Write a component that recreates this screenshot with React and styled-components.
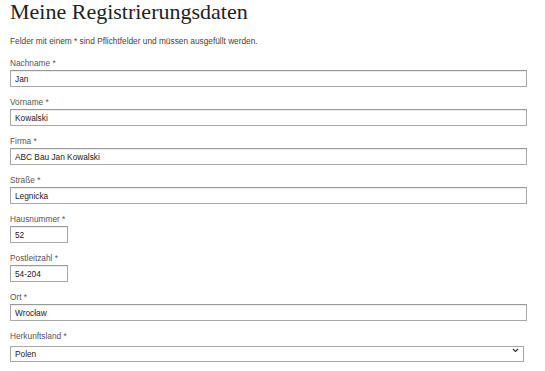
import React from "react";
import styled, { createGlobalStyle } from "styled-components";

const GlobalStyle = createGlobalStyle`
  html, body {
    margin: 0;
    padding: 0;
    background: #fff;
  }
  body {
    font-family: "Liberation Sans", Arial, sans-serif;
  }
`;

const Page = styled.div`
  padding: 1px 18px 0 10px;
`;

const Title = styled.h1`
  margin: 0;
  font-family: "Liberation Serif", "Times New Roman", serif;
  font-weight: normal;
  font-size: 22px;
  line-height: 22px;
  color: #222;
`;

const Intro = styled.p`
  margin: 13px 0 12px;
  font-size: 8.3px;
  line-height: 10px;
  color: #444;
`;

const Form = styled.form`
  display: flex;
  flex-direction: column;
  gap: 10px;
`;

const Field = styled.div`
  display: flex;
  flex-direction: column;
  gap: 2px;
`;

const Label = styled.label`
  font-size: 8.3px;
  line-height: 10px;
  color: #555;
`;

const Input = styled.input`
  box-sizing: border-box;
  width: ${(p) => (p.$short ? "58px" : "100%")};
  height: 17px;
  margin: 0;
  padding: 0 4px;
  border: 1px solid #a8a8a8;
  border-top-color: #999;
  box-shadow: inset 0 1px 1px rgba(0, 0, 0, 0.08);
  border-radius: 0;
  font-family: "Liberation Sans", Arial, sans-serif;
  font-size: 8.3px;
  color: #222;
  background: #fff;
  outline: none;
`;

const SelectWrap = styled.div`
  position: relative;
  width: calc(100% - 3px);
`;

const Select = styled.select`
  box-sizing: border-box;
  width: 100%;
  height: 16px;
  margin: 0;
  padding: 0 4px;
  border: 1px solid #a8a8a8;
  border-radius: 0;
  appearance: none;
  background: #fff;
  font-family: "Liberation Sans", Arial, sans-serif;
  font-size: 8.3px;
  color: #222;
  outline: none;
`;

const Chevron = styled.svg`
  position: absolute;
  right: 5px;
  top: 5px;
  pointer-events: none;
`;

const fields = [
  { id: "nachname", label: "Nachname *", value: "Jan" },
  { id: "vorname", label: "Vorname *", value: "Kowalski" },
  { id: "firma", label: "Firma *", value: "ABC Bau Jan Kowalski" },
  { id: "strasse", label: "Straße *", value: "Legnicka" },
  { id: "hausnummer", label: "Hausnummer *", value: "52", short: true },
  { id: "plz", label: "Postleitzahl *", value: "54-204", short: true },
  { id: "ort", label: "Ort *", value: "Wrocław" },
];

export default function App() {
  return (
    <Page>
      <GlobalStyle />
      <Title>Meine Registrierungsdaten</Title>
      <Intro>
        Felder mit einem * sind Pflichtfelder und müssen ausgefüllt werden.
      </Intro>
      <Form>
        {fields.map((f) => (
          <Field key={f.id}>
            <Label htmlFor={f.id}>{f.label}</Label>
            <Input id={f.id} $short={f.short} defaultValue={f.value} />
          </Field>
        ))}
        <Field>
          <Label htmlFor="land">Herkunftsland *</Label>
          <SelectWrap>
            <Select id="land" defaultValue="PL">
              <option value="PL">Polen</option>
              <option value="DE">Deutschland</option>
            </Select>
            <Chevron width="7" height="5" viewBox="0 0 7 5">
              <path d="M1 1l2.5 2.5L6 1" fill="none" stroke="#333" strokeWidth="1.2" />
            </Chevron>
          </SelectWrap>
        </Field>
      </Form>
    </Page>
  );
}
